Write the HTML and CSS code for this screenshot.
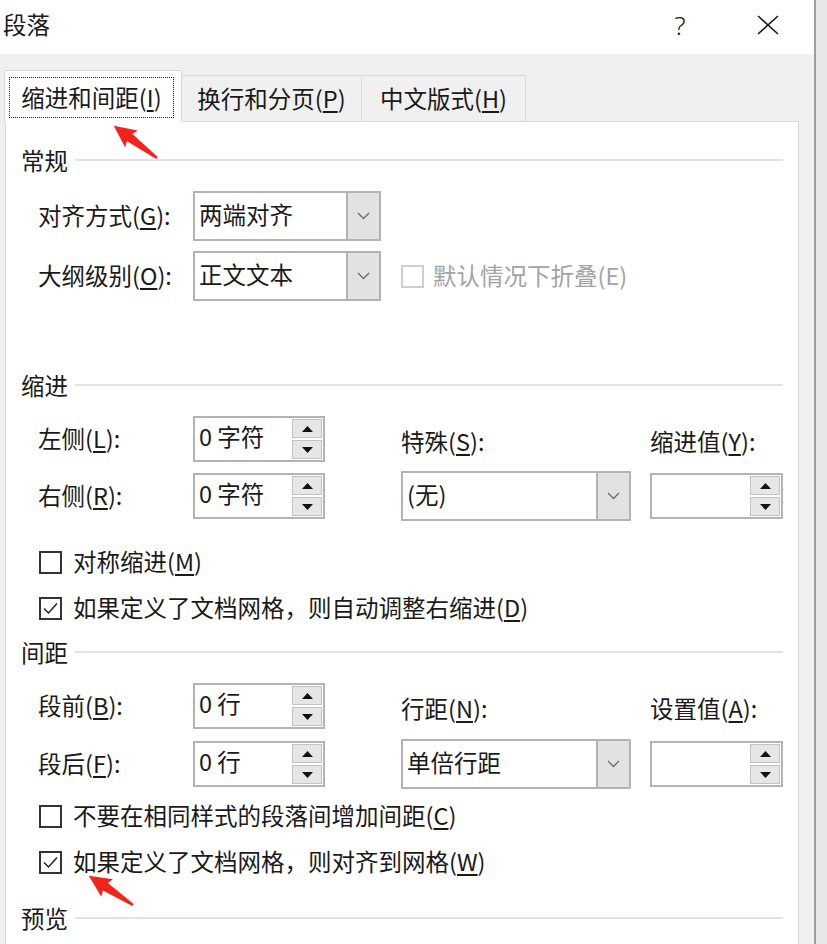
FILE: index.html
```html
<!DOCTYPE html>
<html lang="zh-CN">
<head>
<meta charset="utf-8">
<title>段落</title>
<link rel="stylesheet" href="styles.css">
</head>
<body>
<div class="window">
  <header class="titlebar">
    <span class="title">段落</span>
    <span class="help">?</span>
    <span class="close"><svg width="22" height="20" viewBox="0 0 22 20"><path d="M1 1 L21 19 M21 1 L1 19" stroke="#1a1a1a" stroke-width="1.6" fill="none"/></svg></span>
  </header>
  <main class="body">
    <nav class="tabs">
      <div class="tab active"><span class="focus">缩进和间距(<u>I</u>)</span></div>
      <div class="tab t2">换行和分页(<u>P</u>)</div>
      <div class="tab t3">中文版式(<u>H</u>)</div>
    </nav>
    <section class="panel">
      <div class="sec s1"><span>常规</span></div>
      <div class="grid r1">
        <span class="lbl">对齐方式(<u>G</u>):</span>
        <div class="select w188"><span class="val">两端对齐</span><span class="dd"><svg width="13" height="8" viewBox="0 0 13 8"><polyline points="1,1 6.5,6.5 12,1" fill="none" stroke="#6a6a6a" stroke-width="1.3"/></svg></span></div>
      </div>
      <div class="grid r2">
        <span class="lbl">大纲级别(<u>O</u>):</span>
        <div class="select w188"><span class="val">正文文本</span><span class="dd"><svg width="13" height="8" viewBox="0 0 13 8"><polyline points="1,1 6.5,6.5 12,1" fill="none" stroke="#6a6a6a" stroke-width="1.3"/></svg></span></div>
        <div class="cb disabled span2"><span class="box"></span><span>默认情况下折叠(E)</span></div>
      </div>

      <div class="sec s2"><span>缩进</span></div>
      <div class="grid r3">
        <span class="lbl">左侧(<u>L</u>):</span>
        <div class="spin"><span class="val">0 字符</span><span class="btns"><span class="btn"><svg width="11" height="6" viewBox="0 0 11 6"><polygon points="0,6 5.5,0 11,6" fill="#111"/></svg></span><span class="btn"><svg width="11" height="6" viewBox="0 0 11 6"><polygon points="0,0 5.5,6 11,0" fill="#111"/></svg></span></span></div>
        <span class="lbl sub">特殊(<u>S</u>):</span>
        <span class="lbl sub">缩进值(<u>Y</u>):</span>
      </div>
      <div class="grid r4">
        <span class="lbl">右侧(<u>R</u>):</span>
        <div class="spin"><span class="val">0 字符</span><span class="btns"><span class="btn"><svg width="11" height="6" viewBox="0 0 11 6"><polygon points="0,6 5.5,0 11,6" fill="#111"/></svg></span><span class="btn"><svg width="11" height="6" viewBox="0 0 11 6"><polygon points="0,0 5.5,6 11,0" fill="#111"/></svg></span></span></div>
        <div class="select w230"><span class="val">(无)</span><span class="dd"><svg width="13" height="8" viewBox="0 0 13 8"><polyline points="1,1 6.5,6.5 12,1" fill="none" stroke="#6a6a6a" stroke-width="1.3"/></svg></span></div>
        <div class="spin w133"><span class="val"></span><span class="btns"><span class="btn"><svg width="11" height="6" viewBox="0 0 11 6"><polygon points="0,6 5.5,0 11,6" fill="#111"/></svg></span><span class="btn"><svg width="11" height="6" viewBox="0 0 11 6"><polygon points="0,0 5.5,6 11,0" fill="#111"/></svg></span></span></div>
      </div>
      <div class="cb c1"><span class="box"></span><span>对称缩进(<u>M</u>)</span></div>
      <div class="cb c2"><span class="box"><svg width="19" height="19" viewBox="0 0 19 19"><polyline points="3,9.5 7.5,14 16,4.5" fill="none" stroke="#222" stroke-width="1.5"/></svg></span><span>如果定义了文档网格，则自动调整右缩进(<u>D</u>)</span></div>

      <div class="sec s3"><span>间距</span></div>
      <div class="grid r5">
        <span class="lbl">段前(<u>B</u>):</span>
        <div class="spin"><span class="val">0 行</span><span class="btns"><span class="btn"><svg width="11" height="6" viewBox="0 0 11 6"><polygon points="0,6 5.5,0 11,6" fill="#111"/></svg></span><span class="btn"><svg width="11" height="6" viewBox="0 0 11 6"><polygon points="0,0 5.5,6 11,0" fill="#111"/></svg></span></span></div>
        <span class="lbl sub">行距(<u>N</u>):</span>
        <span class="lbl sub">设置值(<u>A</u>):</span>
      </div>
      <div class="grid r6">
        <span class="lbl">段后(<u>F</u>):</span>
        <div class="spin"><span class="val">0 行</span><span class="btns"><span class="btn"><svg width="11" height="6" viewBox="0 0 11 6"><polygon points="0,6 5.5,0 11,6" fill="#111"/></svg></span><span class="btn"><svg width="11" height="6" viewBox="0 0 11 6"><polygon points="0,0 5.5,6 11,0" fill="#111"/></svg></span></span></div>
        <div class="select w230"><span class="val">单倍行距</span><span class="dd"><svg width="13" height="8" viewBox="0 0 13 8"><polyline points="1,1 6.5,6.5 12,1" fill="none" stroke="#6a6a6a" stroke-width="1.3"/></svg></span></div>
        <div class="spin w133"><span class="val"></span><span class="btns"><span class="btn"><svg width="11" height="6" viewBox="0 0 11 6"><polygon points="0,6 5.5,0 11,6" fill="#111"/></svg></span><span class="btn"><svg width="11" height="6" viewBox="0 0 11 6"><polygon points="0,0 5.5,6 11,0" fill="#111"/></svg></span></span></div>
      </div>
      <div class="cb c3"><span class="box"></span><span>不要在相同样式的段落间增加间距(<u>C</u>)</span></div>
      <div class="cb c4"><span class="box"><svg width="19" height="19" viewBox="0 0 19 19"><polyline points="3,9.5 7.5,14 16,4.5" fill="none" stroke="#222" stroke-width="1.5"/></svg></span><span>如果定义了文档网格，则对齐到网格(<u>W</u>)</span></div>

      <div class="sec s4"><span>预览</span></div>
    </section>
  </main>
</div>
<svg class="arrows" width="827" height="944" viewBox="0 0 827 944">
  <polygon transform="translate(157 158) rotate(216.7)" points="0,-1.2 34,-4.5 32,-10.5 54,0 32,10.5 34,4.5 0,1.2" fill="#f2231b"/>
  <polygon transform="translate(133 905) rotate(213.4)" points="0,-1.2 33,-4.5 31,-10.5 53,0 31,10.5 33,4.5 0,1.2" fill="#f2231b"/>
</svg>
</body>
</html>
```

FILE: styles.css
```css
* { box-sizing: border-box; }
html, body { margin: 0; padding: 0; }
body {
  width: 827px;
  height: 944px;
  overflow: hidden;
  position: relative;
  background: #e8e8e8;
  font-family: "Noto Sans CJK SC", "Noto Sans", sans-serif;
  font-size: 23.5px;
  color: #1a1a1a;
}
u { text-decoration: underline; text-underline-offset: 3px; text-decoration-thickness: 1.5px; }

.window {
  width: 816px;
  height: 944px;
  border-right: 2px solid #9e9e9e;
  background: #f0f0f0;
}

.titlebar {
  height: 54px;
  background: #ffffff;
  display: flex;
  align-items: center;
  padding-right: 26px;
  padding-bottom: 4px;
}
.title { padding-left: 3px; line-height: 1; }
.help {
  margin-left: auto;
  width: 24px;
  text-align: center;
  font-family: "Noto Sans", "DejaVu Sans", sans-serif;
  font-weight: 300;
  font-size: 26px;
  line-height: 1;
  color: #222;
}
.close {
  margin-left: 56px;
  width: 40px;
  display: flex;
  justify-content: center;
  align-items: center;
}

.body { padding: 16px 0 0 5px; }

.tabs {
  display: flex;
  align-items: flex-end;
  height: 52px;
  margin-left: -1px;
  margin-bottom: -1px;
  position: relative;
  z-index: 1;
}
.tab {
  height: 46px;
  margin-bottom: 1px;
  border: 1px solid #d9d9d9;
  border-bottom: none;
  background: #f0f0f0;
  display: flex;
  align-items: center;
  justify-content: center;
  margin-left: -1px;
  line-height: 1;
}
.tab.active {
  margin-left: 0;
  width: 178px;
  height: 52px;
  margin-bottom: 0;
  background: #ffffff;
  padding: 6px 7px 4px 4px;
  position: relative;
  z-index: 2;
}
.focus {
  width: 100%;
  height: 100%;
  border: 1px dotted #222;
  display: flex;
  align-items: center;
  justify-content: center;
}
.t2 { width: 181px; }
.t3 { width: 165px; }

.panel {
  width: 794px;
  height: 840px;
  background: #ffffff;
  border: 1px solid #d9d9d9;
  padding: 0 15px;
}

.sec {
  display: flex;
  align-items: center;
  height: 24px;
  line-height: 1;
}
.sec::after {
  content: "";
  flex: 1;
  height: 2px;
  background: #e2e2e2;
  margin-left: 7px;
  margin-top: -2px;
}
.s1 { margin-top: 27px; }
.s2 { margin-top: 73px; }
.s3 { margin-top: 21px; }
.s4 { margin-top: 33px; }

.grid {
  display: grid;
  grid-template-columns: 155px 208px 249px 133px;
  align-items: center;
  padding-left: 17px;
}
.r1 { margin-top: 18px; }
.r2 { margin-top: 10px; }
.r3 { margin-top: 18px; }
.r4 { margin-top: 9px; }
.r5 { margin-top: 18px; }
.r6 { margin-top: 10px; }

.lbl { line-height: 1; white-space: nowrap; }
.lbl.sub { padding-top: 6px; }

.select {
  height: 50px;
  border: 2px solid #b3b3b3;
  background: #ffffff;
  display: flex;
}
.w188 { width: 188px; }
.w230 { width: 230px; }
.val {
  flex: 1;
  display: flex;
  align-items: center;
  padding-left: 4px;
  line-height: 1;
  padding-bottom: 2px;
  white-space: nowrap;
}
.dd {
  width: 33px;
  background: #e2e2e2;
  border-left: 2px solid #b3b3b3;
  display: flex;
  align-items: center;
  justify-content: center;
}

.spin {
  width: 132px;
  height: 46px;
  border: 2px solid #b3b3b3;
  background: #ffffff;
  display: flex;
}
.spin.w133 { width: 133px; height: 46px; }
.spin .val { padding-bottom: 5px; }
.btns {
  width: 31px;
  display: flex;
  flex-direction: column;
  gap: 2px;
  padding: 1px 1px 1px 0;
}
.btn {
  flex: 1;
  background: #e6e6e6;
  border: 1px solid #c2c2c2;
  display: flex;
  align-items: center;
  justify-content: center;
}

.cb {
  display: flex;
  align-items: center;
  height: 24px;
  line-height: 1;
  white-space: nowrap;
}
.panel > .cb { padding-left: 18px; }
.box {
  width: 23px;
  height: 23px;
  border: 2px solid #333333;
  background: #ffffff;
  margin-right: 11px;
  display: flex;
  align-items: center;
  justify-content: center;
  flex: none;
}
.cb.disabled { color: #a3a3a3; margin-left: 0; }
.cb.disabled .box { border-color: #cfcfcf; margin-right: 9px; }
.span2 { grid-column: 3 / 5; }

.c1 { margin-top: 29px; }
.c2 { margin-top: 22px; }
.c3 { margin-top: 15px; }
.c4 { margin-top: 22px; }

.arrows {
  position: absolute;
  left: 0;
  top: 0;
  pointer-events: none;
}
```
